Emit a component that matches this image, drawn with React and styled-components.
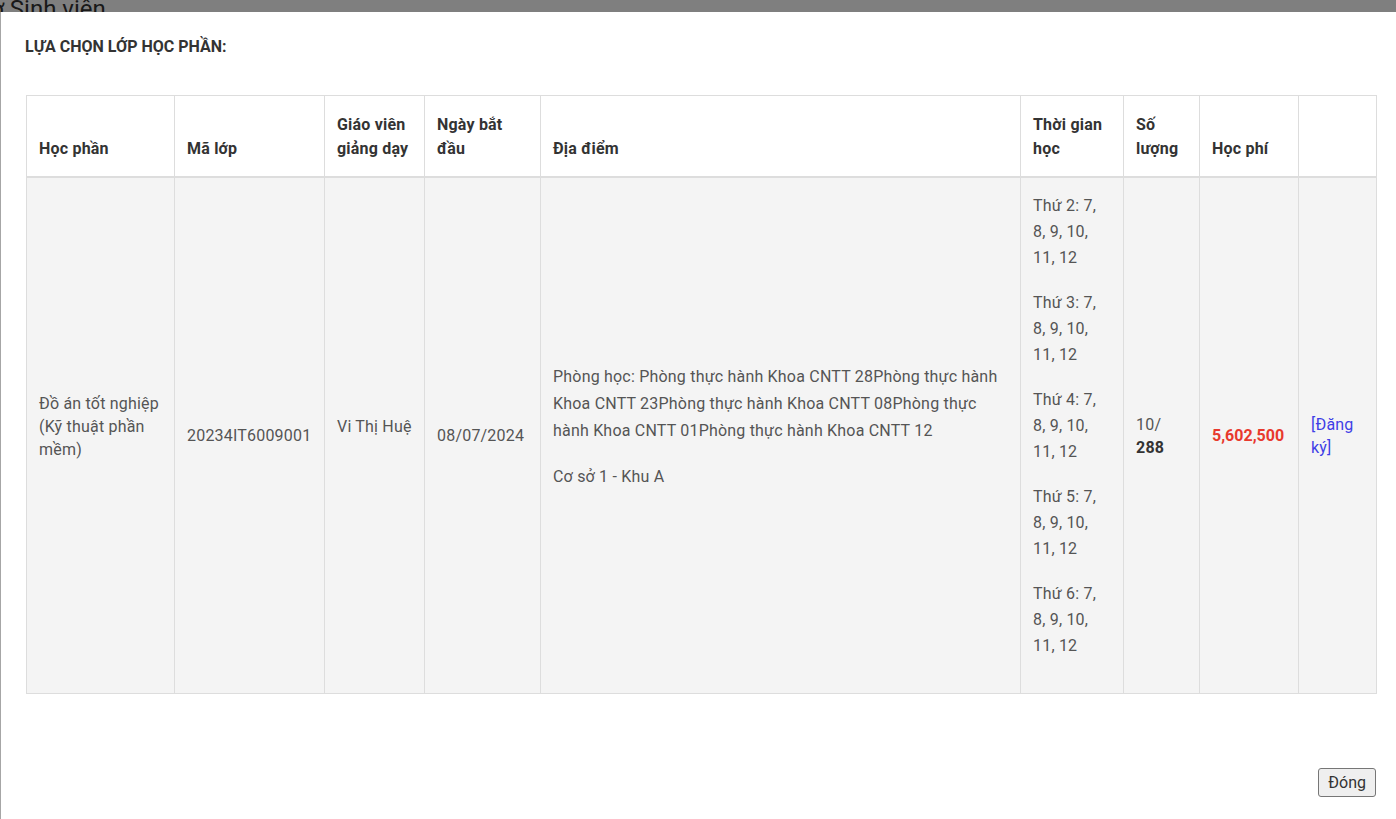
import React from "react";
import styled, { createGlobalStyle } from "styled-components";

const GlobalStyle = createGlobalStyle`
  *, *::before, *::after { box-sizing: border-box; }
  html, body { margin: 0; padding: 0; }
  body {
    font-family: Roboto, "Liberation Sans", Arial, sans-serif;
    font-size: 16px;
    color: #555;
    background: #fff;
    overflow: hidden;
    height: 819px;
  }
`;

const Page = styled.div`
  position: relative;
  height: 819px;
  overflow: hidden;
`;

const PageTitle = styled.h1`
  margin: -3px 0 0 -59px;
  font-size: 24px;
  line-height: 24px;
  font-weight: 400;
  color: #333;
`;

const Backdrop = styled.div`
  position: absolute;
  inset: 0;
  background: rgba(0, 0, 0, 0.5);
`;

const Modal = styled.div`
  position: absolute;
  top: 12px;
  left: 0;
  right: -10px;
  min-height: 900px;
  background: #fff;
  border-left: 1px solid rgba(0, 0, 0, 0.35);
  padding: 25px 30px 20px 25px;
`;

const Title = styled.h4`
  margin: 0 0 38px -1px;
  font-size: 16px;
  line-height: 20px;
  font-weight: 700;
  color: #333;
`;

const Table = styled.table`
  width: 1350px;
  border-collapse: collapse;
  table-layout: fixed;
  border: 1px solid #ddd;
  letter-spacing: 0.2px;
`;

const Th = styled.th`
  padding: 17px 12px 15px;
  border: 1px solid #ddd;
  border-bottom: 2px solid #ddd;
  text-align: left;
  vertical-align: bottom;
  font-weight: 700;
  line-height: 24px;
  color: #333;
`;

const Td = styled.td`
  padding: 15px 12px;
  border: 1px solid #ddd;
  background: #f4f4f4;
  vertical-align: middle;
  line-height: 23px;
`;

const Para = styled.p`
  margin: 0 0 19px;
  line-height: ${(p) => p.$lh || 23}px;
`;

const Strong = styled.b`
  color: #333;
`;

const Price = styled.b`
  color: #e8392d;
  letter-spacing: 0;
`;

const RegLink = styled.a`
  color: #3f3fe6;
  text-decoration: none;
  cursor: pointer;
`;

const Footer = styled.div`
  display: flex;
  justify-content: flex-end;
  width: 1350px;
  margin-top: 74px;
`;

const CloseButton = styled.button`
  font-family: Roboto, "Liberation Sans", Arial, sans-serif;
  font-size: 16px;
  color: #333;
  height: 29px;
  padding: 0 9px;
  background: #efefef;
  border: 1px solid #767676;
  border-radius: 3px;
`;

const columns = [
  { title: "Học phần", width: 148 },
  { title: "Mã lớp", width: 150 },
  { title: "Giáo viên giảng dạy", width: 100 },
  { title: "Ngày bắt đầu", width: 116 },
  { title: "Địa điểm", width: 480 },
  { title: "Thời gian học", width: 103 },
  { title: "Số lượng", width: 76 },
  { title: "Học phí", width: 99 },
  { title: "", width: 78 },
];

const schedule = ["Thứ 2", "Thứ 3", "Thứ 4", "Thứ 5", "Thứ 6"];

export default function App() {
  return (
    <Page>
      <GlobalStyle />
      <PageTitle>Hồ sơ Sinh viên</PageTitle>
      <Backdrop />
      <Modal>
        <Title>LỰA CHỌN LỚP HỌC PHẦN:</Title>
        <Table>
          <colgroup>
            {columns.map((c, i) => (
              <col key={i} style={{ width: c.width }} />
            ))}
          </colgroup>
          <thead>
            <tr>
              {columns.map((c, i) => (
                <Th key={i}>{c.title}</Th>
              ))}
            </tr>
          </thead>
          <tbody>
            <tr>
              <Td>
                <Para>Đồ án tốt nghiệp (Kỹ thuật phần mềm)</Para>
              </Td>
              <Td>20234IT6009001</Td>
              <Td>
                <Para>Vi Thị Huệ</Para>
              </Td>
              <Td>08/07/2024</Td>
              <Td>
                <Para $lh={27}>
                  Phòng học: Phòng thực hành Khoa CNTT 28Phòng thực hành Khoa CNTT
                  23Phòng thực hành Khoa CNTT 08Phòng thực hành Khoa CNTT 01Phòng
                  thực hành Khoa CNTT 12
                </Para>
                <Para $lh={27}>Cơ sở 1 - Khu A</Para>
              </Td>
              <Td>
                {schedule.map((d) => (
                  <Para key={d} $lh={26}>
                    {d}: 7, 8, 9, 10, 11, 12
                  </Para>
                ))}
              </Td>
              <Td>
                10/ <Strong>288</Strong>
              </Td>
              <Td>
                <Price>5,602,500</Price>
              </Td>
              <Td>
                <RegLink>[Đăng ký]</RegLink>
              </Td>
            </tr>
          </tbody>
        </Table>
        <Footer>
          <CloseButton>Đóng</CloseButton>
        </Footer>
      </Modal>
    </Page>
  );
}
